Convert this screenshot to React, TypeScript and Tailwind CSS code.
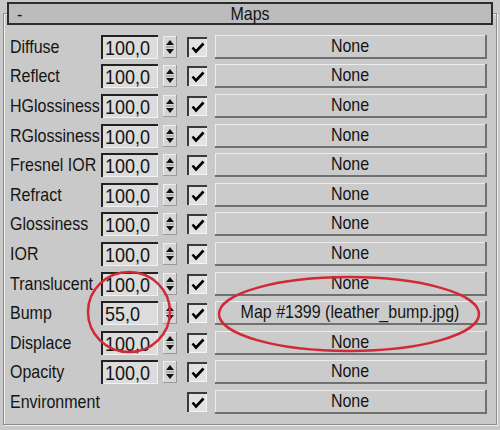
import React from 'react'

type Row = { label: string; value?: string; map?: string }

const rows: Row[] = [
  { label: 'Diffuse', value: '100,0' },
  { label: 'Reflect', value: '100,0' },
  { label: 'HGlossiness', value: '100,0' },
  { label: 'RGlossiness', value: '100,0' },
  { label: 'Fresnel IOR', value: '100,0' },
  { label: 'Refract', value: '100,0' },
  { label: 'Glossiness', value: '100,0' },
  { label: 'IOR', value: '100,0' },
  { label: 'Translucent', value: '100,0' },
  { label: 'Bump', value: '55,0', map: 'Map #1399 (leather_bump.jpg)' },
  { label: 'Displace', value: '100,0' },
  { label: 'Opacity', value: '100,0' },
  { label: 'Environment' },
]

function Spinner() {
  return (
    <div className="ml-[5px] w-[14px] h-[22px] bg-[#d6d6d6] shadow-[inset_-1px_-1px_0_#9a9a9a,inset_1px_1px_0_#eeeeee] flex items-center justify-center">
      <svg width="10" height="18" viewBox="0 0 10 18">
        <path d="M5 2 L9 7 L1 7 Z" fill="#111" />
        <line x1="1" y1="9" x2="9" y2="9" stroke="#8a8a8a" strokeWidth="1" />
        <path d="M1 11 L9 11 L5 16 Z" fill="#111" />
      </svg>
    </div>
  )
}

function Check() {
  return (
    <div className="w-[20px] h-[20px] bg-[#e2e2e2] border-t-2 border-l-2 border-[#3a3a3a] shadow-[inset_-1px_-1px_0_#f4f4f4] flex items-center justify-center">
      <svg width="14" height="12" viewBox="0 0 14 12">
        <path d="M1.5 5.5 L5 9.5 L12.5 1.5" fill="none" stroke="#000" strokeWidth="2.6" />
      </svg>
    </div>
  )
}

export default function App() {
  return (
    <div className="relative w-[500px] h-[430px] bg-[#c9c9c9] text-[#151515] font-['Liberation_Sans',Arial,sans-serif] text-[16px] leading-none pl-[3px] pr-[3px] pt-[13px] pb-[5px]">
      {/* etched group frame */}
      <div className="h-full border border-[#8c8c8c] shadow-[inset_1px_1px_0_#efefef,1px_1px_0_#efefef]">
        {/* rollout title */}
        <div className="relative -mt-[12px] mx-[3px] h-[23px] bg-[#bcbcbc] border-2 border-[#2c2c2c] flex items-center justify-center">
          <span className="absolute left-[8px] top-[3px] inline-block scale-y-120">-</span>
          <span className="inline-block scale-y-120">Maps</span>
        </div>

        <div className="mt-[7px] flex flex-col">
          {rows.map((r) => (
            <div key={r.label} className="h-[29.6px] flex items-center pl-[6px]">
              <div className="w-[91px] whitespace-nowrap">
                <span className="inline-block scale-y-120">{r.label}</span>
              </div>
              {r.value ? (
                <>
                  <div className="w-[57px] h-[24px] bg-[#dcdcdc] border-t-2 border-l-2 border-[#222] shadow-[inset_-1px_-1px_0_#f2f2f2] flex items-center pl-[2px] text-[18px]">
                    <span className="inline-block scale-y-110">{r.value}</span>
                  </div>
                  <Spinner />
                </>
              ) : (
                <div className="w-[76px]" />
              )}
              <div className="ml-[10px]">
                <Check />
              </div>
              <button className="ml-[8px] w-[272px] h-[24px] bg-[#cbcbcb] border-r-2 border-b-2 border-[#707070] shadow-[inset_1px_1px_0_#ececec] flex items-center justify-center">
                <span className="inline-block scale-y-120">{r.map ?? 'None'}</span>
              </button>
            </div>
          ))}
        </div>
      </div>

      {/* red annotation marks */}
      <svg className="absolute inset-0 pointer-events-none" width="500" height="430">
        <ellipse cx="129" cy="312" rx="41" ry="40" fill="none" stroke="#d02a36" strokeWidth="2.5" />
        <ellipse cx="349" cy="314" rx="130" ry="37" fill="none" stroke="#d02a36" strokeWidth="2.5" />
      </svg>
    </div>
  )
}
